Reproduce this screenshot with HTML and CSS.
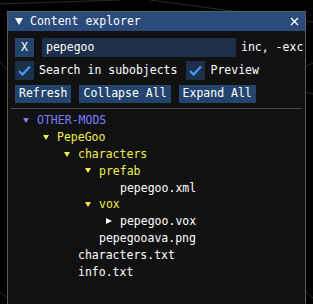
FILE: index.html
```html
<!DOCTYPE html>
<html>
<head>
    <title>Content explorer</title>
    <link rel="stylesheet" href="styles.css">
</head>
<body>

    <!-- faint grid lines of the 3d view behind the window -->
    <svg class="scene" width="313" height="304">
        <line x1="0" y1="4" x2="120" y2="0" />
        <line x1="150" y1="0" x2="313" y2="22" />
        <line x1="0" y1="62" x2="7" y2="70" />
        <line x1="306" y1="66" x2="313" y2="63" />
        <line x1="306" y1="92" x2="313" y2="94" />
        <line x1="0" y1="292" x2="7" y2="298" />
        <line x1="306" y1="292" x2="313" y2="298" />
    </svg>

    <div class="window">
        <div class="titlebar">
            <span class="collapse"></span>
            <span class="title">Content explorer</span>
            <svg class="close" width="9" height="9" viewBox="0 0 9 9"><path d="M1 1 L8 8 M8 1 L1 8" /></svg>
        </div>

        <div class="body">
            <div class="line">
                <div class="button square">X</div>
                <div class="input">pepegoo</div>
                <span class="hint">inc, -exc</span>
            </div>

            <div class="line">
                <div class="checkbox">
                    <svg width="13" height="11" viewBox="0 0 13 11"><path d="M1 6 L4.5 9.5 L12 1.5" /></svg>
                </div>
                <span class="label">Search in subobjects</span>
                <div class="checkbox second">
                    <svg width="13" height="11" viewBox="0 0 13 11"><path d="M1 6 L4.5 9.5 L12 1.5" /></svg>
                </div>
                <span class="label">Preview</span>
            </div>

            <div class="line">
                <div class="button">Refresh</div>
                <div class="button">Collapse All</div>
                <div class="button">Expand All</div>
            </div>

            <div class="separator"></div>

            <div class="tree">
                <div class="node d0 mod"><span class="arrow open"></span>OTHER-MODS</div>
                <div class="node d1 dir"><span class="arrow open"></span>PepeGoo</div>
                <div class="node d2 dir"><span class="arrow open"></span>characters</div>
                <div class="node d3 dir"><span class="arrow open"></span>prefab</div>
                <div class="node d4"><span class="arrow"></span>pepegoo.xml</div>
                <div class="node d3 dir"><span class="arrow open"></span>vox</div>
                <div class="node d4"><span class="arrow shut"></span>pepegoo.vox</div>
                <div class="node d3"><span class="arrow"></span>pepegooava.png</div>
                <div class="node d2"><span class="arrow"></span>characters.txt</div>
                <div class="node d2"><span class="arrow"></span>info.txt</div>
            </div>
        </div>
    </div>

</body>
</html>
```

FILE: styles.css
```css
/* imgui-like dark window over a black scene */
body, html {
    margin: 0;
    height: 100%;
    overflow: hidden;
    background: #000;
    color: #fff;
    font: 400 11.5px/1 "DejaVu Sans Mono", "Liberation Mono", monospace;
}

body {
    position: relative;
}

.scene {
    position: absolute;
    top: 0;
    left: 0;
}

.scene line {
    stroke: #2a2a2a;
    stroke-width: 1;
}

.window {
    position: relative;
    margin: 11px 0 0 7px;
    width: 299px;
    height: 300px;
    background: #111;
    border: 1px solid #5a5a66;
    border-bottom: none;
    box-sizing: border-box;
}

.titlebar {
    display: flex;
    align-items: center;
    height: 19px;
    background: #294a7a;
    padding: 0 6px 0 7px;
}

.collapse {
    width: 0;
    height: 0;
    border-left: 4px solid transparent;
    border-right: 4px solid transparent;
    border-top: 7px solid #fff;
    margin-right: 7px;
}

.title {
    flex: 1;
}

.close path {
    stroke: #fff;
    stroke-width: 1.4;
}

.body {
    display: flex;
    flex-direction: column;
    padding: 7px 0 0 7px;
}

.line {
    display: flex;
    align-items: center;
    height: 19px;
    margin-bottom: 4px;
}

.button {
    display: flex;
    align-items: center;
    height: 18px;
    padding: 0 4px;
    margin-right: 8px;
    background: #23456d;
}

.button.square {
    width: 19px;
    height: 19px;
    padding: 0;
    justify-content: center;
}

.input {
    display: flex;
    align-items: center;
    width: 194px;
    height: 19px;
    padding-left: 4px;
    box-sizing: border-box;
    background: #1d2f49;
    margin-right: 5px;
}

.checkbox {
    display: flex;
    align-items: center;
    justify-content: center;
    width: 19px;
    height: 19px;
    background: #1d2f49;
    margin-right: 5px;
}

.checkbox.second {
    margin-left: 9px;
}

.checkbox path {
    fill: none;
    stroke: #4296fa;
    stroke-width: 2.4;
}

.separator {
    height: 1px;
    background: #4a4a55;
    margin: 1px 3px 0 -4px;
}

.tree {
    display: flex;
    flex-direction: column;
    padding-top: 3.5px;
}

.node {
    display: flex;
    align-items: center;
    height: 16.85px;
}

.node.mod {
    color: #7d7dff;
}

.node.dir {
    color: #f0f048;
}

.d0 { padding-left: 8px; }
.d1 { padding-left: 28px; }
.d2 { padding-left: 49px; }
.d3 { padding-left: 70px; }
.d4 { padding-left: 91px; }

.arrow {
    width: 14px;
    height: 6px;
    position: relative;
}

.arrow.open::before {
    content: "";
    position: absolute;
    top: 0;
    left: 0;
    border-left: 3px solid transparent;
    border-right: 3px solid transparent;
    border-top: 5px solid currentColor;
}

.arrow.shut::before {
    content: "";
    position: absolute;
    top: -1px;
    left: 0;
    border-top: 3.5px solid transparent;
    border-bottom: 3.5px solid transparent;
    border-left: 6px solid #fff;
}
```
